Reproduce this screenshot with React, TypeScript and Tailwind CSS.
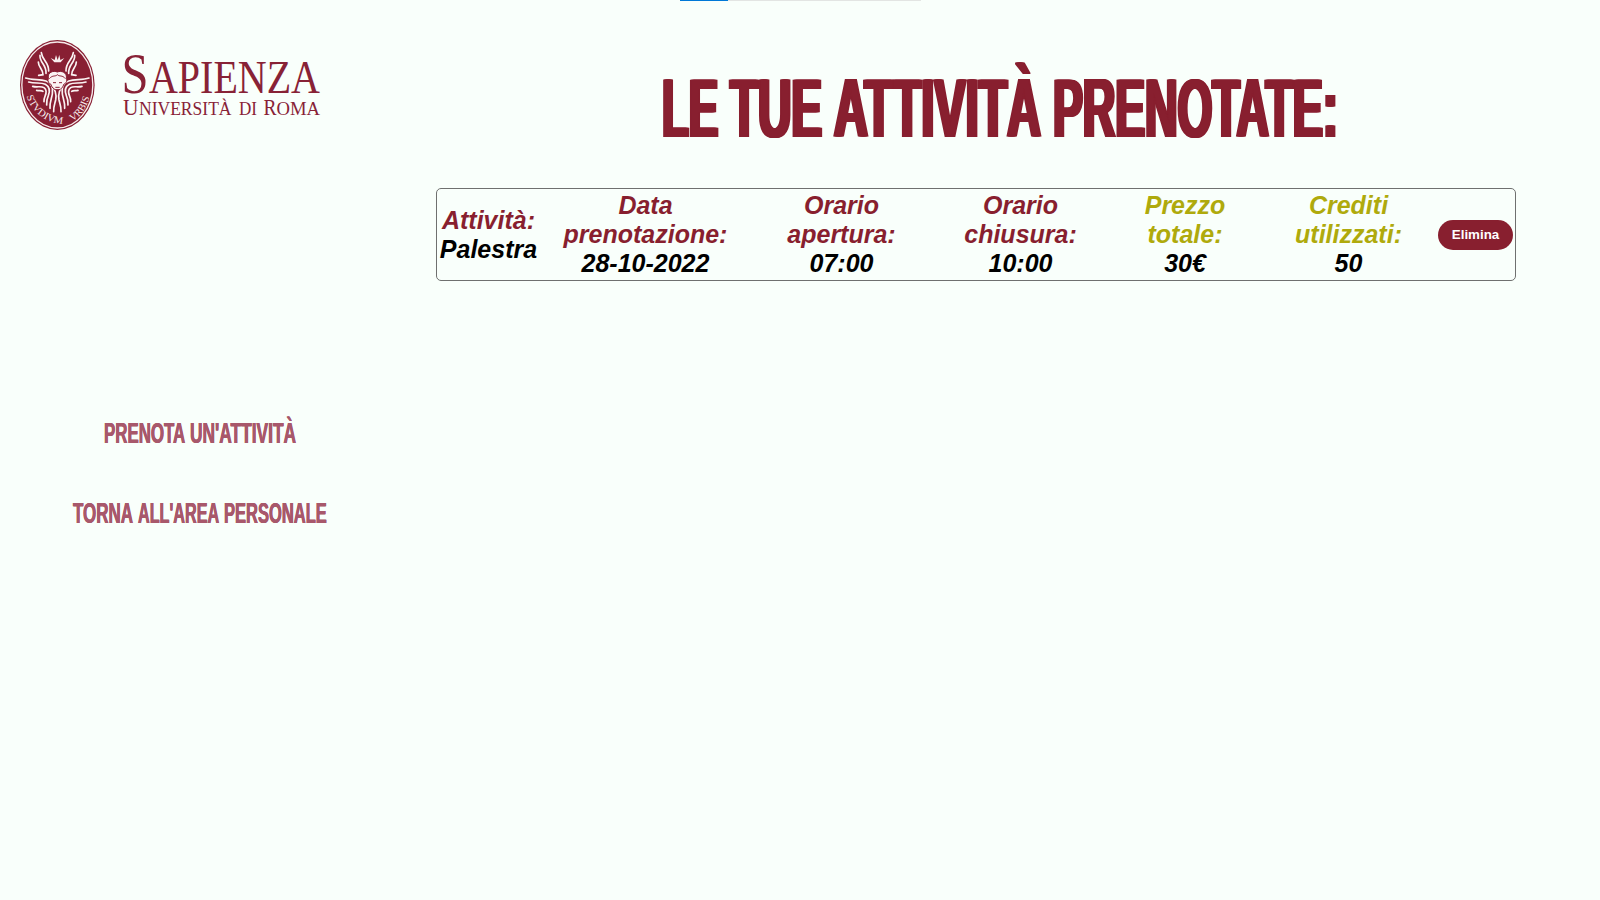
import { useLayoutEffect, useRef, useState } from 'react';

type WordProps = { text: string; boxClass: string; fontClass: string };

/** A word condensed horizontally so that its glyphs fill the box exactly. */
function CondensedWord({ text, boxClass, fontClass }: WordProps) {
  const box = useRef<HTMLSpanElement>(null);
  const word = useRef<HTMLSpanElement>(null);
  const [scale, setScale] = useState(0.6);

  useLayoutEffect(() => {
    if (box.current && word.current) {
      setScale(box.current.clientWidth / word.current.offsetWidth);
    }
  }, [text]);

  return (
    <span ref={box} className={`inline-block whitespace-nowrap ${boxClass}`}>
      <span
        ref={word}
        className={`inline-block origin-left whitespace-nowrap ${fontClass}`}
        style={{ transform: `scaleX(${scale})` }}
      >
        {text}
      </span>
    </span>
  );
}

const titleFont =
  "font-['Liberation_Sans_Narrow','Liberation_Sans',sans-serif] font-bold text-[84px] leading-[90px] [text-shadow:1.7px_0_#881f2f,-1.7px_0_#881f2f,3.4px_0_#881f2f,-3.4px_0_#881f2f]";
const linkFont =
  "font-['Liberation_Sans_Narrow','Liberation_Sans',sans-serif] font-bold text-[30px] leading-[36px] [text-shadow:0.5px_0_#a8586b,-0.5px_0_#a8586b]";

const titleWords = [
  { text: 'LE', boxClass: 'w-[56px]' },
  { text: 'TUE', boxClass: 'w-[92px]' },
  { text: 'ATTIVITÀ', boxClass: 'w-[207px]' },
  { text: 'PRENOTATE:', boxClass: 'w-[285px]' },
];

const columns = [
  { width: 'w-[102px]', lines: ['Attività:'], value: 'Palestra', color: 'text-[#881f2f]' },
  { width: 'w-[212px]', lines: ['Data', 'prenotazione:'], value: '28-10-2022', color: 'text-[#881f2f]' },
  { width: 'w-[180px]', lines: ['Orario', 'apertura:'], value: '07:00', color: 'text-[#881f2f]' },
  { width: 'w-[178px]', lines: ['Orario', 'chiusura:'], value: '10:00', color: 'text-[#881f2f]' },
  { width: 'w-[151px]', lines: ['Prezzo', 'totale:'], value: '30€', color: 'text-[#afaa0c]' },
  { width: 'w-[176px]', lines: ['Crediti', 'utilizzati:'], value: '50', color: 'text-[#afaa0c]' },
];

function Wing() {
  return (
    <g fill="none" stroke="#fbf3f3" strokeLinecap="round" strokeWidth="5">
      <path d="M94 68 C96 90 117 96 116 123" />
      <path d="M90 76 C88 98 110 104 108 130" />
      <path d="M85 96 C85 112 99 116 99 134 L86 136" />
      <path d="M47 144 C68 151 88 147 108 153 C124 158 130 172 127 192 C125 206 119 214 120 235" />
      <path d="M56 156 C76 162 92 156 106 163 C118 170 120 184 115 197 C111 206 109 213 110 225" />
      <path d="M68 169 C82 173 93 167 102 173 C110 179 109 190 105 199 C102 206 101 210 102 215" />
      <path d="M80 181 C88 183 94 180 99 184" />
      <path d="M124 166 C137 178 140 192 137 210 C134 222 130 230 131 245" />
    </g>
  );
}

function Logo() {
  return (
    <div className="flex pl-2.5 pt-[30px]">
      <svg className="h-[110px] w-[100px]" viewBox="0 0 300 330" aria-hidden="true">
        <ellipse cx="142" cy="165" rx="112" ry="135" fill="#881f33" />
        <ellipse cx="142" cy="165" rx="106.500" ry="129" fill="none" stroke="#f6eaeb" strokeWidth="4" />
        <Wing />
        <g transform="translate(284 0) scale(-1 1)">
          <Wing />
        </g>
        <path d="M122 84 L133 97 H152 L163 84 L151 90 L148 75 L143 90 L138 75 L134 90 Z" fill="#f8eeee" />
        <path
          d="M115 144 C112 126 131 121 142 126 C154 121 172 127 169 145 C173 157 166 160 162 162 L158 171 L150 179 H135 L126 171 L122 162 C116 160 112 155 115 144 Z"
          fill="#fbf3f3"
          stroke="#881f33"
          strokeWidth="3"
        />
        <path
          d="M118 146 C128 134 136 141 142 134 C149 141 157 134 166 146 M129 158 H138 M147 158 H156 M136 172 H149"
          fill="none"
          stroke="#881f33"
          strokeWidth="3"
        />
        <path id="motto-left" d="M50 199 C64 246 108 282 166 282" fill="none" />
        <path id="motto-right" d="M186 274 C212 262 231 234 240 196" fill="none" />
        <g fill="#f8eeee" fontFamily="'Liberation Serif', serif" fontSize="30">
          <text>
            <textPath href="#motto-left" textLength="145" lengthAdjust="spacingAndGlyphs">STVDIVM</textPath>
          </text>
          <text>
            <textPath href="#motto-right" textLength="92" lengthAdjust="spacingAndGlyphs">VRBIS</textPath>
          </text>
        </g>
      </svg>
      <svg
        className="h-[110px] w-[240px]"
        viewBox="110 30 240 110"
        role="img"
        aria-label="Sapienza Università di Roma"
        fill="#882236"
        fontFamily="'Liberation Serif', serif"
      >
        <text x="121.500" y="92.500" fontSize="57" textLength="27" lengthAdjust="spacingAndGlyphs">S</text>
        <text x="149" y="92.500" fontSize="46" textLength="171" lengthAdjust="spacingAndGlyphs">APIENZA</text>
        <text x="123" y="115.300" fontSize="23" textLength="15.500" lengthAdjust="spacingAndGlyphs">U</text>
        <text x="139" y="115.300" fontSize="19" textLength="92.500" lengthAdjust="spacingAndGlyphs">NIVERSITÀ</text>
        <text x="239" y="115.300" fontSize="19" textLength="18" lengthAdjust="spacingAndGlyphs">DI</text>
        <text x="263.500" y="115.300" fontSize="23" textLength="13" lengthAdjust="spacingAndGlyphs">R</text>
        <text x="276.500" y="115.300" fontSize="19" textLength="43.500" lengthAdjust="spacingAndGlyphs">OMA</text>
      </svg>
    </div>
  );
}

export default function App() {
  return (
    <div className="h-[900px] w-[1600px] overflow-hidden bg-[#f9fffb]">
      <div className="absolute left-[680px] top-0 flex h-px w-[241px] bg-[#e3e5e3]">
        <div className="w-12 bg-[#0078d7]" />
      </div>
      <div className="flex">
        <aside className="w-[400px]">
          <Logo />
          <nav className="flex flex-col gap-11 pt-[275px] text-[#a8586b]">
            <a className="flex gap-[5px] pl-[104px]">
              <CondensedWord text="PRENOTA" boxClass="w-[81px]" fontClass={linkFont} />
              <CondensedWord text="UN'ATTIVITÀ" boxClass="w-[106px]" fontClass={linkFont} />
            </a>
            <a className="flex gap-[5px] pl-[73px]">
              <CondensedWord text="TORNA" boxClass="w-[60px]" fontClass={linkFont} />
              <CondensedWord text="ALL'AREA" boxClass="w-[81px]" fontClass={linkFont} />
              <CondensedWord text="PERSONALE" boxClass="w-[103px]" fontClass={linkFont} />
            </a>
          </nav>
        </aside>
        <main className="flex-1">
          <h1 className="flex gap-[12px] pl-[262px] pt-[63px] text-[#881f2f]">
            {titleWords.map((word) => (
              <CondensedWord key={word.text} text={word.text} boxClass={word.boxClass} fontClass={titleFont} />
            ))}
          </h1>
          <section className="ml-9 mt-[35px] flex h-[93px] w-[1080px] items-center rounded-[5px] border border-[#6f706f] pl-[0.5px] font-['Liberation_Sans',Arial,sans-serif]">
            {columns.map((column) => (
              <div
                key={column.lines.join(' ')}
                className={`shrink-0 text-center text-[25px] font-bold italic leading-[29px] ${column.width}`}
              >
                {column.lines.map((line) => (
                  <div key={line} className={column.color}>
                    {line}
                  </div>
                ))}
                <div className="text-black">{column.value}</div>
              </div>
            ))}
            <button className="ml-[1.5px] h-[30px] w-[75px] rounded-full bg-[#881f2f] text-[13.333px] font-bold text-white">
              Elimina
            </button>
          </section>
        </main>
      </div>
    </div>
  );
}
